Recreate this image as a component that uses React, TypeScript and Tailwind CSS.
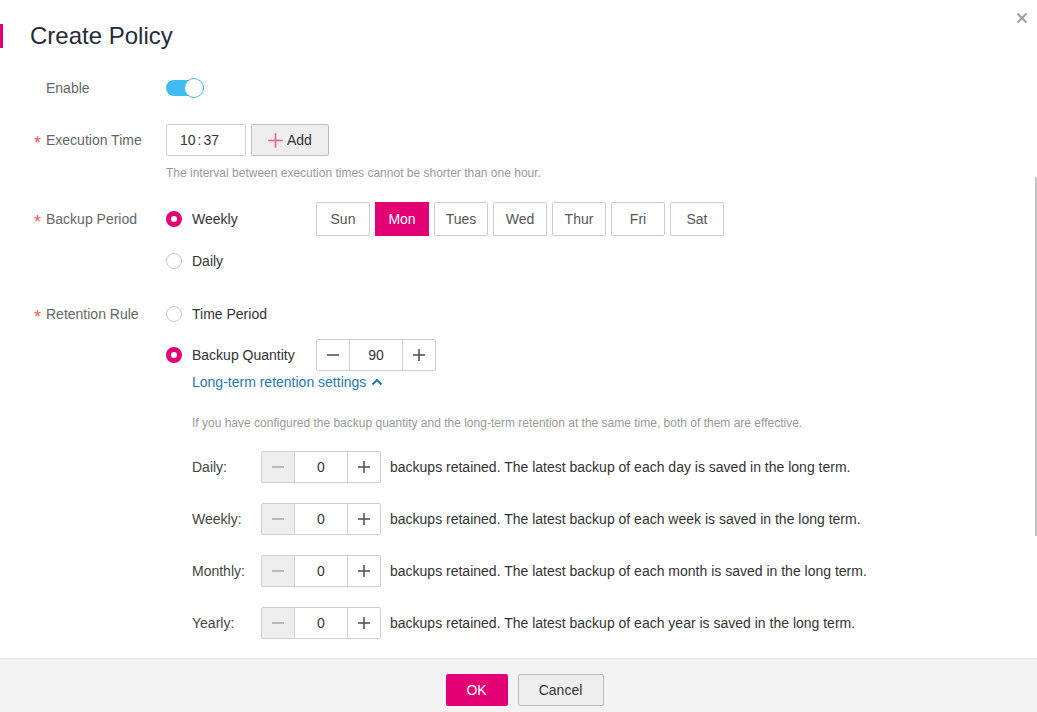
import React from "react";

function Radio({ checked }: { checked?: boolean }) {
  return checked ? (
    <span className="box-border inline-block w-[16px] h-[16px] rounded-full border-[5px] border-[#e20074] bg-white shrink-0" />
  ) : (
    <span className="box-border inline-block w-[16px] h-[16px] rounded-full border border-[#c8c8c8] bg-white shrink-0" />
  );
}

function Minus({ color }: { color: string }) {
  return (
    <svg width="14" height="14" viewBox="0 0 14 14">
      <line x1="1" y1="7" x2="13" y2="7" stroke={color} strokeWidth="1.6" />
    </svg>
  );
}

function Plus({ color, size = 14, w = 1.6 }: { color: string; size?: number; w?: number }) {
  return (
    <svg width={size} height={size} viewBox="0 0 14 14">
      <line x1="1" y1="7" x2="13" y2="7" stroke={color} strokeWidth={w} />
      <line x1="7" y1="1" x2="7" y2="13" stroke={color} strokeWidth={w} />
    </svg>
  );
}

function Stepper({ value, disabledMinus }: { value: string; disabledMinus?: boolean }) {
  return (
    <div className="box-border flex w-[120px] h-[32px] border border-[#cfcfcf] rounded-[2px] bg-white">
      <div
        className={
          "box-border w-[33px] shrink-0 flex items-center justify-center border-r border-[#cfcfcf] " +
          (disabledMinus ? "bg-[#eeeeee]" : "bg-white")
        }
      >
        <Minus color={disabledMinus ? "#aaaaaa" : "#555555"} />
      </div>
      <div className="box-border w-[53px] shrink-0 flex items-center justify-center border-r border-[#cfcfcf] text-[14px] text-[#333]">
        {value}
      </div>
      <div className="flex-1 flex items-center justify-center">
        <Plus color="#555555" />
      </div>
    </div>
  );
}

function Label({ text, required }: { text: string; required?: boolean }) {
  return (
    <div className="w-[132px] flex items-center text-[14px] text-[#666]">
      <span className="w-[12px] text-[#f25c5c] text-[18px] leading-none pt-[6px]">{required ? "*" : ""}</span>
      <span>{text}</span>
    </div>
  );
}

const days = ["Sun", "Mon", "Tues", "Wed", "Thur", "Fri", "Sat"];

const retention = [
  { l: "Daily:", t: "backups retained. The latest backup of each day is saved in the long term." },
  { l: "Weekly:", t: "backups retained. The latest backup of each week is saved in the long term." },
  { l: "Monthly:", t: "backups retained. The latest backup of each month is saved in the long term." },
  { l: "Yearly:", t: "backups retained. The latest backup of each year is saved in the long term." },
];

export default function App() {
  return (
    <div className="relative w-[1037px] h-[712px] overflow-hidden bg-white font-['Liberation_Sans',Arial,sans-serif] text-[14px] text-[#333]">
      <div className="flex flex-col h-full">
        {/* header */}
        <div className="flex items-center pt-[24px] pb-[24px]">
          <span className="w-[3px] h-[24px] bg-[#e20074]" />
          <span className="ml-[27px] text-[24px] leading-[24px] text-[#252b3a]">Create Policy</span>
        </div>

        {/* body */}
        <div className="flex-1 pl-[34px]">
          {/* Enable */}
          <div className="flex h-[32px]">
            <Label text="Enable" />
            <div className="flex items-center">
              <div className="relative w-[38px] h-[20px]">
                <span className="absolute left-0 top-[2px] w-[34px] h-[16px] rounded-full bg-[#3fbdf0]" />
                <span className="box-border absolute right-0 top-0 w-[20px] h-[20px] rounded-full bg-white border border-[#3fbdf0]" />
              </div>
            </div>
          </div>

          {/* Execution time */}
          <div className="flex h-[32px] mt-[20px]">
            <Label text="Execution Time" required />
            <div className="flex items-center gap-[5px]">
              <div className="box-border w-[80px] h-[32px] border border-[#cfcfcf] rounded-[2px] flex items-center pl-[13px] text-[14px] text-[#333]">
                10<span className="mx-[2px]">:</span>37
              </div>
              <div className="box-border w-[78px] h-[32px] border border-[#bdbdbd] rounded-[2px] bg-[#eeeeee] flex items-center pl-[15px] gap-[3px] text-[14px] text-[#333]">
                <Plus color="#e8698f" size={17} w={1.4} />
                <span>Add</span>
              </div>
            </div>
          </div>
          <div className="ml-[132px] mt-[9px] text-[12px] leading-[16px] text-[#999]">
            The interval between execution times cannot be shorter than one hour.
          </div>

          {/* Backup Period */}
          <div className="flex mt-[21px]">
            <div className="h-[34px] flex">
              <Label text="Backup Period" required />
            </div>
            <div className="flex flex-col">
              <div className="flex items-center h-[34px]">
                <div className="w-[150px] flex items-center gap-[10px]">
                  <Radio checked />
                  <span>Weekly</span>
                </div>
                <div className="flex gap-[5px]">
                  {days.map((d) =>
                    d === "Mon" ? (
                      <div key={d} className="w-[54px] h-[34px] flex items-center justify-center bg-[#e20074] text-white">
                        {d}
                      </div>
                    ) : (
                      <div
                        key={d}
                        className="box-border w-[54px] h-[34px] flex items-center justify-center border border-[#cccccc] rounded-[2px] text-[#555]"
                      >
                        {d}
                      </div>
                    )
                  )}
                </div>
              </div>
              <div className="flex items-center h-[32px] mt-[9px] gap-[10px]">
                <Radio />
                <span>Daily</span>
              </div>
            </div>
          </div>

          {/* Retention Rule */}
          <div className="flex mt-[21px]">
            <div className="h-[32px] flex">
              <Label text="Retention Rule" required />
            </div>
            <div className="flex flex-col">
              <div className="flex items-center h-[32px] gap-[10px]">
                <Radio />
                <span>Time Period</span>
              </div>
              <div className="flex items-center h-[32px] mt-[9px]">
                <div className="w-[150px] flex items-center gap-[10px]">
                  <Radio checked />
                  <span>Backup Quantity</span>
                </div>
                <Stepper value="90" />
              </div>
              <div className="ml-[26px] mt-[1px] h-[20px] flex items-center gap-[5px] text-[#1f78b4]">
                <span>Long-term retention settings</span>
                <svg width="12" height="10" viewBox="0 0 12 10">
                  <polyline points="1.5,7.5 6,3 10.5,7.5" fill="none" stroke="#1f78b4" strokeWidth="2" />
                </svg>
              </div>
              <div className="ml-[26px] mt-[23px] text-[12px] leading-[16px] text-[#999]">
                If you have configured the backup quantity and the long-term retention at the same time, both of them are effective.
              </div>
              {retention.map((r) => (
                <div key={r.l} className="ml-[26px] flex items-center h-[32px] mt-[20px]">
                  <span className="w-[69px] text-[#444]">{r.l}</span>
                  <Stepper value="0" disabledMinus />
                  <span className="ml-[9px] text-[#333]">{r.t}</span>
                </div>
              ))}
            </div>
          </div>
        </div>

        {/* footer */}
        <div className="h-[54px] shrink-0 bg-[#f3f3f3] border-t border-[#e6e6e6] flex justify-center items-start pt-[15px] pl-[12px] gap-[10px]">
          <div className="w-[62px] h-[32px] rounded-[2px] bg-[#e20074] text-white flex items-center justify-center">OK</div>
          <div className="box-border w-[86px] h-[32px] rounded-[2px] bg-[#eeeeee] border border-[#bdbdbd] text-[#333] flex items-center justify-center">
            Cancel
          </div>
        </div>
      </div>

      {/* close */}
      <svg className="absolute left-[1016px] top-[12px]" width="12" height="12" viewBox="0 0 12 12">
        <line x1="1.5" y1="1.5" x2="10.5" y2="10.5" stroke="#a0a0a0" strokeWidth="2.2" />
        <line x1="10.5" y1="1.5" x2="1.5" y2="10.5" stroke="#a0a0a0" strokeWidth="2.2" />
      </svg>

      {/* scrollbar thumb */}
      <span className="absolute left-[1035px] top-[177px] w-[2px] h-[359px] bg-[#c4c4c4]" />
    </div>
  );
}
